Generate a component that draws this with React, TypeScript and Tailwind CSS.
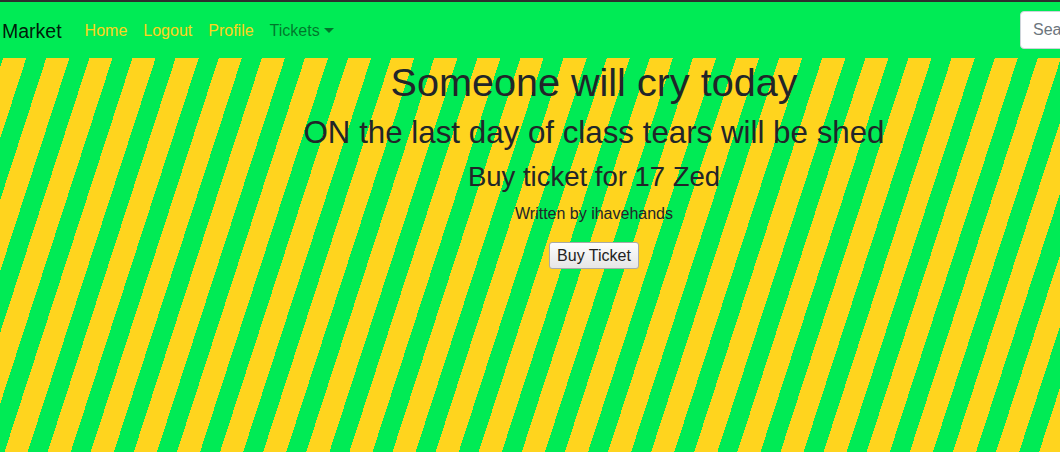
export default function App() {
  return (
    <div className="w-[1060px] h-[452px] overflow-hidden font-['Liberation_Sans',Arial,sans-serif] text-[#212529]">
      <div className="w-[1188px] h-full flex flex-col">
        <nav className="h-[58px] border-t-2 border-[#2e2e2e] bg-[#00eb55] flex items-center pl-[2px] pr-[2px]">
          <a href="#" className="text-[19.5px] leading-[30px] text-black/90 mr-[15px] pt-px">
            Market
          </a>
          <ul className="flex items-center pt-px">
            <li>
              <a href="#" className="block px-2 py-2 text-[16px] leading-6 text-[#ffd41e]">
                Home
              </a>
            </li>
            <li>
              <a href="#" className="block px-2 py-2 text-[16px] leading-6 text-[#ffd41e]">
                Logout
              </a>
            </li>
            <li>
              <a href="#" className="block px-2 py-2 text-[16px] leading-6 text-[#ffd41e]">
                Profile
              </a>
            </li>
            <li>
              <a href="#" className="flex items-center px-2 py-2 text-[16px] leading-6 text-black/50">
                Tickets
                <span className="ml-[4px] w-0 h-0 border-t-[5px] border-t-black/50 border-x-[5px] border-x-transparent" />
              </a>
            </li>
          </ul>
          <form className="ml-auto">
            <input
              type="search"
              placeholder="Search"
              className="w-[166px] h-[38px] rounded bg-white border border-[#ced4da] px-3 text-[16px] text-[#495057] placeholder:text-[#6c757d] outline-none"
            />
          </form>
        </nav>
        <main className="flex-1 flex flex-col items-center bg-[repeating-linear-gradient(108deg,#00eb55_0px,#00eb55_3px,#ffd41e_3px,#ffd41e_25px,#00eb55_25px,#00eb55_41px)]">
          <h1 className="text-[39.6px] leading-[48px] mb-2">Someone will cry today</h1>
          <h2 className="text-[31.3px] leading-[38.4px] mb-2">ON the last day of class tears will be shed</h2>
          <h3 className="text-[27.5px] leading-[33.6px] mb-2">Buy ticket for 17 Zed</h3>
          <p className="text-[16px] leading-6 mb-4">Written by ihavehands</p>
          <button className="h-[27px] px-[7px] border border-[#a9a9a9] rounded-[3px] bg-[linear-gradient(#fdfdfd,#e6e6e6)] text-[16px] leading-6 text-[#222]">
            Buy Ticket
          </button>
        </main>
      </div>
    </div>
  );
}
